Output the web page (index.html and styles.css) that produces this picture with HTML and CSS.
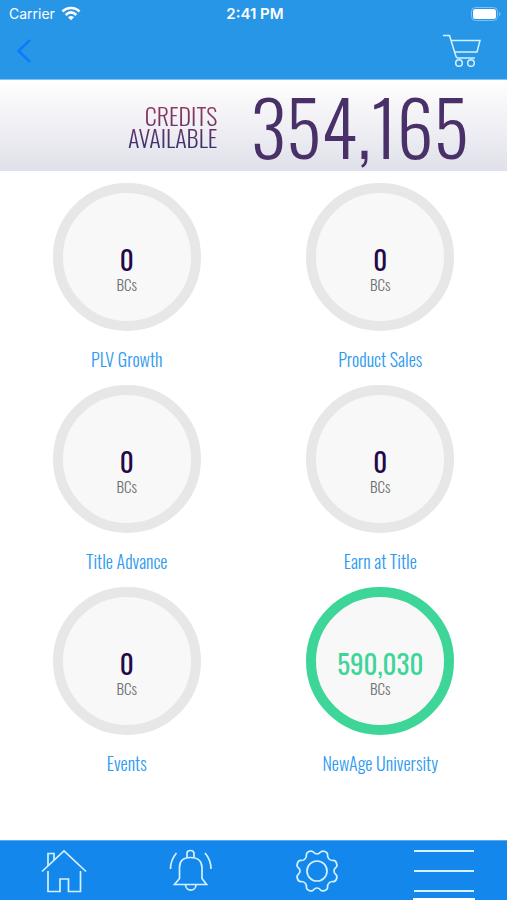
FILE: index.html
```html
<!DOCTYPE html>
<html lang="en">
<head>
    <meta charset="UTF-8">
    <meta name="viewport" content="width=device-width, initial-scale=1.0">
    <title>Credits</title>
    <link rel="stylesheet" href="styles.css">
</head>
<body>
    <header class="header">
        <div class="status-bar">
            <div class="carrier">
                <span>Carrier</span>
                <svg width="20" height="15" viewBox="0 0 20 15" fill="none" stroke="#fff" stroke-width="2.600">
                    <path d="M1.500 5.500C6 .8 14 .8 18.500 5.500"/>
                    <path d="M4.700 9C8 5.800 12 5.800 15.300 9"/>
                    <path d="M7 11.300Q10 8.700 13 11.300L10 14.300Z" fill="#fff" stroke="none"/>
                </svg>
            </div>
            <div class="clock">2:41 PM</div>
            <div class="battery">
                <svg width="30" height="14" viewBox="0 0 30 14">
                    <rect x=".5" y=".5" width="26" height="13" rx="4" fill="none" stroke="#7fc0f2"/>
                    <rect x="2" y="2" width="23" height="10" rx="2.500" fill="#fff"/>
                    <path d="M28 5v4q1.500-.5 1.500-2T28 5z" fill="#7fc0f2"/>
                </svg>
            </div>
        </div>
        <div class="nav-bar">
            <button type="button" class="icon-button" aria-label="Back">
                <svg width="16" height="24" viewBox="0 0 16 24" fill="none" stroke="#0a7aff" stroke-width="2.500">
                    <path d="M14 1L2.500 12 14 23"/>
                </svg>
            </button>
            <button type="button" class="icon-button" aria-label="Cart">
                <svg width="38" height="34" viewBox="0 0 38 34" fill="none" stroke="#d4f1ff" stroke-width="1.500">
                    <path d="M0 1.500h6.500L13 22.500q.5 1.500 2 1.500h17"/>
                    <path d="M8 6.500h29L34 18H11.500"/>
                    <circle cx="16" cy="29" r="3.300"/>
                    <circle cx="28" cy="29" r="3.300"/>
                </svg>
            </button>
        </div>
    </header>

    <section class="credits">
        <div class="credits-label">CREDITS<br>AVAILABLE</div>
        <div class="credits-total">354,165</div>
    </section>

    <main class="grid">
        <a class="item" href="#">
            <div class="circle"><span class="value">0</span><span class="unit">BCs</span></div>
            <div class="name">PLV Growth</div>
        </a>
        <a class="item" href="#">
            <div class="circle"><span class="value">0</span><span class="unit">BCs</span></div>
            <div class="name">Product Sales</div>
        </a>
        <a class="item" href="#">
            <div class="circle"><span class="value">0</span><span class="unit">BCs</span></div>
            <div class="name">Title Advance</div>
        </a>
        <a class="item" href="#">
            <div class="circle"><span class="value">0</span><span class="unit">BCs</span></div>
            <div class="name">Earn at Title</div>
        </a>
        <a class="item" href="#">
            <div class="circle"><span class="value">0</span><span class="unit">BCs</span></div>
            <div class="name">Events</div>
        </a>
        <a class="item" href="#">
            <div class="circle earned"><span class="value">590,030</span><span class="unit">BCs</span></div>
            <div class="name">NewAge University</div>
        </a>
    </main>

    <nav class="tab-bar">
        <a class="tab" href="#" aria-label="Home">
            <svg width="48" height="44" viewBox="0 0 48 44" fill="none" stroke="#d4f1ff" stroke-width="1.700">
                <path d="M3 22.500L25 2 47 22.500"/>
                <path d="M9 17V4.500h6V11"/>
                <path d="M9 22v20.500h12V30h8.500v12.500h12V22"/>
            </svg>
        </a>
        <a class="tab" href="#" aria-label="Notifications">
            <svg width="44" height="44" viewBox="0 0 44 44" fill="none" stroke="#d4f1ff" stroke-width="1.700">
                <path d="M19 9V4.500q0-3 3.500-3t3.500 3V9"/>
                <path d="M6.500 35.500h32L34 29.500V18.500C34 12 29.500 8.500 22.500 8.500S11.500 12 11.500 18.500v11z"/>
                <path d="M17.500 35.500c0 7.500 10.500 7.500 10.500 0"/>
                <path d="M8.500 4Q2.500 11 2.500 20"/>
                <path d="M37 4q6 7 6 16"/>
            </svg>
        </a>
        <a class="tab" href="#" aria-label="Settings">
            <svg width="44" height="44" viewBox="-22 -22 44 44" fill="none" stroke="#d4f1ff" stroke-width="1.700">
                <circle r="10"/>
                <path id="teeth" d="M0-17C4.500-17 2.500-21.600 7.900-19.500 13.300-17.400 8.300-15.700 12-12 15.700-8.300 17.400-13.300 19.500-7.900 21.600-2.500 17-4.500 17 0"/>
                <use href="#teeth" transform="rotate(90)"/>
                <use href="#teeth" transform="rotate(180)"/>
                <use href="#teeth" transform="rotate(270)"/>
            </svg>
        </a>
        <a class="tab active" href="#" aria-label="Menu">
            <svg width="62" height="44" viewBox="0 0 62 44" stroke="#d4f1ff" stroke-width="2">
                <path d="M1 2h60M1 22h60M1 42h60"/>
            </svg>
        </a>
    </nav>
</body>
</html>
```
FILE: styles.css
```css
* {
    box-sizing: border-box;
}
body {
    margin: 0;
    min-height: 100vh;
    display: flex;
    flex-direction: column;
    background: #fff;
    font-family: "Oswald", "Open Sans Condensed", "Roboto Condensed", "Liberation Sans Narrow", "Liberation Sans", sans-serif;
    font-weight: 300;
}
a {
    color: inherit;
    text-decoration: none;
}
svg {
    display: block;
}
.header {
    background: #2896e6;
    border-bottom: 1px solid #7fc4f5;
}
.status-bar {
    display: grid;
    grid-template-columns: 1fr auto 1fr;
    align-items: center;
    height: 27px;
    padding: 0 6px 0 9px;
    color: #fff;
    font-family: Inter, sans-serif;
    font-size: 14px;
    font-weight: 400;
}
.carrier {
    display: flex;
    align-items: center;
    gap: 6px;
}
.clock {
    font-size: 15px;
    font-weight: 600;
}
.battery {
    justify-self: end;
}
.nav-bar {
    display: flex;
    justify-content: space-between;
    align-items: center;
    height: 52px;
    padding: 0 26px 4px 16px;
}
.icon-button {
    padding: 0;
    border: none;
    background: none;
    cursor: pointer;
}
.credits {
    display: grid;
    grid-template-columns: 6fr 7fr;
    align-items: center;
    column-gap: 33px;
    height: 91px;
    padding-right: 3px;
    background: linear-gradient(#fff, #e0e0ea);
}
.credits-label {
    justify-self: end;
    text-align: right;
    font-size: 24px;
    line-height: 22px;
    color: transparent;
    background: linear-gradient(#9a3a5c, #3b2f6e);
    -webkit-background-clip: text;
    background-clip: text;
}
.credits-total {
    font-size: 74px;
    line-height: 91px;
    color: #4a3068;
}
.grid {
    flex: 1;
    display: grid;
    grid-template-columns: 1fr 1fr;
    align-content: start;
    row-gap: 12px;
    padding: 12px 0;
}
.item {
    display: flex;
    flex-direction: column;
    align-items: center;
    gap: 14px;
}
.circle {
    display: flex;
    flex-direction: column;
    align-items: center;
    justify-content: center;
    width: 148px;
    height: 148px;
    padding-top: 24px;
    border: 10px solid #e7e7e7;
    border-radius: 50%;
    background: #f8f8f8;
}
.value {
    font-size: 27px;
    line-height: 30px;
    font-weight: 400;
    color: #220a4a;
}
.unit {
    font-size: 15px;
    line-height: 20px;
    color: #707070;
}
.earned {
    border-color: #3dd598;
}
.earned .value {
    color: #3dd598;
}
.name {
    font-size: 18px;
    line-height: 28px;
    color: #2f9bf0;
}
.tab-bar {
    display: grid;
    grid-template-columns: repeat(4, 1fr);
    height: 60px;
    background: #1487ec;
    border-top: 1px solid #5fa9e8;
}
.tab {
    display: flex;
    flex-direction: column;
    align-items: center;
    padding-top: 8px;
}
.active::after {
    content: "";
    width: 62px;
    height: 2px;
    margin-top: auto;
    background: #fff;
}
```
